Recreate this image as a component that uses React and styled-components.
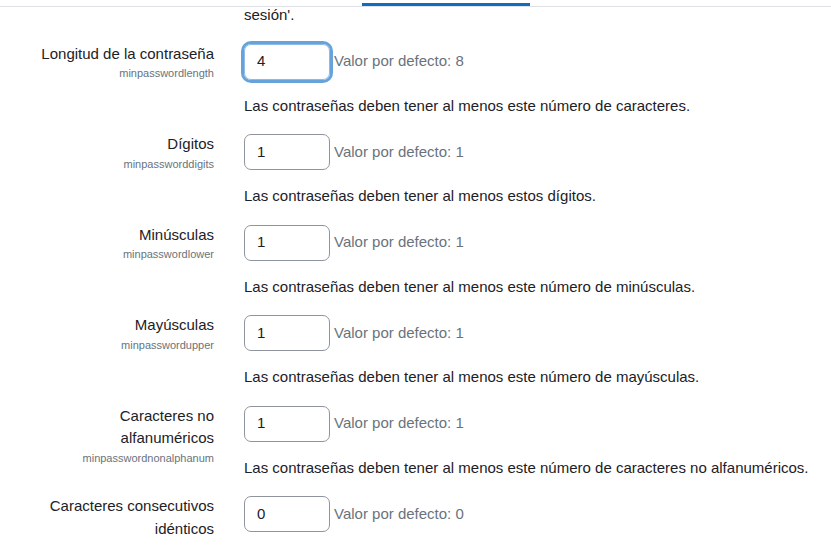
import React from 'react';
import styled, { createGlobalStyle } from 'styled-components';

const GlobalStyle = createGlobalStyle`
  body {
    margin: 0;
    background: #fff;
    font-family: "Liberation Sans", Arial, sans-serif;
    font-size: 15px;
    line-height: 1.5;
    color: #1d2125;
  }
`;

const Page = styled.div`
  width: 831px;
  height: 546px;
  overflow: hidden;
`;

const TabBar = styled.div`
  display: flex;
  height: 6px;
  border-bottom: 1px solid #dee2e6;
`;

const ActiveTab = styled.div`
  align-self: flex-end;
  margin-left: 362px;
  width: 168px;
  height: 3px;
  background: #0f6cbf;
`;

const Settings = styled.div`
  margin-top: -3px;
`;

const Row = styled.div`
  display: grid;
  grid-template-columns: 180px 1fr;
  column-gap: 30px;
  padding-left: 34px;
`;

const LabelCol = styled.div`
  text-align: right;
  margin-top: -1px;
`;

const Label = styled.div`
  color: #1d2125;
`;

const SettingName = styled.div`
  font-size: 11px;
  color: #6a737b;
`;

const Content = styled.div`
  display: flex;
  flex-direction: column;
  align-items: flex-start;
`;

const InputLine = styled.div`
  display: flex;
  align-items: center;
`;

const Input = styled.div`
  box-sizing: border-box;
  width: 86px;
  height: 36px;
  padding: 0 12px;
  display: flex;
  align-items: center;
  border: 1px solid ${p => (p.$focused ? '#8dbbe6' : '#8f959e')};
  border-radius: 7px;
  box-shadow: ${p => (p.$focused ? '0 0 0 3px rgba(30, 120, 200, 0.68)' : 'none')};
  color: #1d2125;
`;

const Default = styled.span`
  margin-left: 4px;
  color: #6a737b;
`;

const Description = styled.div`
  margin-top: ${p => (p.$first ? '0' : '15px')};
  margin-bottom: 17px;
`;

const settings = [
  { label: 'Longitud de la contraseña', name: 'minpasswordlength', value: '4', def: '8', desc: 'Las contraseñas deben tener al menos este número de caracteres.', focused: true },
  { label: 'Dígitos', name: 'minpassworddigits', value: '1', def: '1', desc: 'Las contraseñas deben tener al menos estos dígitos.' },
  { label: 'Minúsculas', name: 'minpasswordlower', value: '1', def: '1', desc: 'Las contraseñas deben tener al menos este número de minúsculas.' },
  { label: 'Mayúsculas', name: 'minpasswordupper', value: '1', def: '1', desc: 'Las contraseñas deben tener al menos este número de mayúsculas.' },
  { label: 'Caracteres no alfanuméricos', name: 'minpasswordnonalphanum', value: '1', def: '1', desc: 'Las contraseñas deben tener al menos este número de caracteres no alfanuméricos.' },
  { label: 'Caracteres consecutivos idénticos', name: 'maxconsecutiveidentchars', value: '0', def: '0' },
];

export default function App() {
  return (
    <Page>
      <GlobalStyle />
      <TabBar>
        <ActiveTab />
      </TabBar>
      <Settings>
        <Row>
          <div />
          <Content>
            <Description $first>sesión'.</Description>
          </Content>
        </Row>
        {settings.map(s => (
          <Row key={s.name}>
            <LabelCol>
              <Label>{s.label}</Label>
              {s.desc && <SettingName>{s.name}</SettingName>}
            </LabelCol>
            <Content>
              <InputLine>
                <Input $focused={s.focused}>{s.value}</Input>
                <Default>Valor por defecto: {s.def}</Default>
              </InputLine>
              {s.desc && <Description>{s.desc}</Description>}
            </Content>
          </Row>
        ))}
      </Settings>
    </Page>
  );
}
